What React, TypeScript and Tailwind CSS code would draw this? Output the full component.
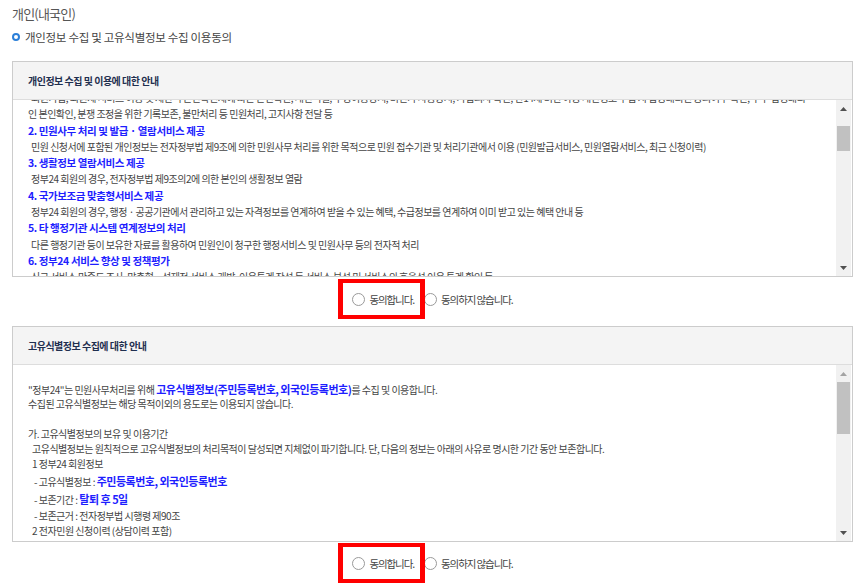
import React from "react";

const FONT = "font-['Noto_Sans_CJK_KR','Noto_Sans',sans-serif]";

function Scrollbar({ upDark, thumbClass }: { upDark: boolean; thumbClass: string }) {
  return (
    <div className="w-[15px] mr-[1px] bg-[#f1f1f1] flex flex-col shrink-0">
      <div className="h-[17px] flex items-center justify-center">
        <svg width="7" height="4" viewBox="0 0 7 4">
          <path d="M0 4 L3.5 0 L7 4 Z" fill={upDark ? "#505050" : "#a3a3a3"} />
        </svg>
      </div>
      <div className="flex-1 px-[1px]">
        <div className={thumbClass} />
      </div>
      <div className="h-[17px] flex items-center justify-center">
        <svg width="7" height="4" viewBox="0 0 7 4">
          <path d="M0 0 L7 0 L3.5 4 Z" fill="#505050" />
        </svg>
      </div>
    </div>
  );
}

function Radio() {
  return <span className="block w-[13px] h-[13px] rounded-full border border-[#9a9a9a] bg-white shrink-0" />;
}

function AgreeRow({ mt, mb }: { mt: string; mb: string }) {
  return (
    <div className={`flex justify-center items-center h-[13px] ${mt} ${mb}`}>
      <div className="relative flex items-center">
        <Radio />
        <span className="ml-[4px] text-[10.5px] leading-[13px] tracking-[-1.1px] text-[#444] whitespace-nowrap">동의합니다.</span>
        <div className="absolute left-[-14px] right-[-11px] top-[-14px] bottom-[-13px] border-y-4 border-x-[5px] border-[#ff0000]" />
      </div>
      <div className="flex items-center ml-[10px]">
        <Radio />
        <span className="ml-[4px] text-[10.5px] leading-[13px] tracking-[-1.1px] text-[#444] whitespace-nowrap">동의하지 않습니다.</span>
      </div>
    </div>
  );
}

const H = "text-[10.5px] font-bold text-[#1e1eff] tracking-[-0.4px] leading-[16.3px] whitespace-nowrap";
const B = "text-[10px] text-[#444] tracking-[-0.5px] leading-[16.3px] whitespace-nowrap pl-[3px]";
const B0 = "text-[10px] text-[#444] tracking-[-0.5px] leading-[16.3px] whitespace-nowrap";

const T = "text-[10px] text-[#444] tracking-[-0.5px] whitespace-nowrap";
const BL = "font-bold text-[#1e1eff] tracking-[-0.5px]";

export default function App() {
  return (
    <div className={`${FONT} bg-white w-[868px] h-[584px] overflow-hidden pt-[5px] pl-[12px] pr-[15px]`}>
      <div className="text-[13px] leading-[18px] tracking-[-0.8px] text-[#555]">개인(내국인)</div>
      <div className="flex items-center mt-[6px] h-[16px]">
        <span className="block w-[8px] h-[8px] rounded-full border-2 border-[#2b7fd8]" />
        <span className="ml-[5px] text-[11.5px] leading-[16px] tracking-[-0.3px] text-[#444]">
          개인정보 수집 및 고유식별정보 수집 이용동의
        </span>
      </div>

      {/* Box 1 */}
      <div className="mt-[16px] border border-[#cccccc]">
        <div className="h-[38px] bg-[#f4f4f4] border-b border-[#dddddd] flex items-center pl-[15px]">
          <span className="text-[10px] font-bold tracking-[-0.5px] text-[#1f2f4f]">개인정보 수집 및 이용에 대한 안내</span>
        </div>
        <div className="h-[176px] flex">
          <div className="flex-1 overflow-hidden pl-[15px]">
            <div className="-mt-[10px]">
              <div className={B}>
                회원가입, 회원제 서비스 이용 및 제한적 본인확인제에 따른 본인확인, 개인식별, 부정이용방지, 비인가 사용방지, 가입의사 확인, 만14세 미만 아동 개인정보 수집 시 법정대리인 동의여부 확인, 추후 법정대리
              </div>
              <div className={B0}>인 본인확인, 분쟁 조정을 위한 기록보존, 불만처리 등 민원처리, 고지사항 전달 등</div>
              <div className={H}>2. 민원사무 처리 및 발급 · 열람서비스 제공</div>
              <div className={B}>
                민원 신청서에 포함된 개인정보는 전자정부법 제9조에 의한 민원사무 처리를 위한 목적으로 민원 접수기관 및 처리기관에서 이용 (민원발급서비스, 민원열람서비스, 최근 신청이력)
              </div>
              <div className={H}>3. 생활정보 열람서비스 제공</div>
              <div className={B}>정부24 회원의 경우, 전자정부법 제9조의2에 의한 본인의 생활정보 열람</div>
              <div className={H}>4. 국가보조금 맞춤형서비스 제공</div>
              <div className={B}>
                정부24 회원의 경우, 행정 · 공공기관에서 관리하고 있는 자격정보를 연계하여 받을 수 있는 혜택, 수급정보를 연계하여 이미 받고 있는 혜택 안내 등
              </div>
              <div className={H}>5. 타 행정기관 시스템 연계정보의 처리</div>
              <div className={B}>다른 행정기관 등이 보유한 자료를 활용하여 민원인이 청구한 행정서비스 및 민원사무 등의 전자적 처리</div>
              <div className={H}>6. 정부24 서비스 향상 및 정책평가</div>
              <div className={B}>
                신규 서비스 만족도 조사, 맞춤형 · 선제적 서비스 개발, 이용통계 작성 등 서비스 분석 및 서비스의 효율성 이용 통계 확인 등
              </div>
            </div>
          </div>
          <Scrollbar upDark={true} thumbClass="mt-[9px] h-[25px] bg-[#c1c1c1]" />
        </div>
      </div>

      <AgreeRow mt="mt-[16px]" mb="mb-[20px]" />

      {/* Box 2 */}
      <div className="border border-[#cccccc]">
        <div className="h-[38px] bg-[#f4f4f4] border-b border-[#dddddd] flex items-center pl-[15px]">
          <span className="text-[10px] font-bold tracking-[-0.5px] text-[#1f2f4f]">고유식별정보 수집에 대한 안내</span>
        </div>
        <div className="h-[176px] flex">
          <div className="flex-1 overflow-hidden pl-[15px] pt-[17px]">
            <div className={`${T} leading-[15px]`}>
              "정부24"는 민원사무처리를 위해 <span className={`${BL} text-[11px]`}>고유식별정보(주민등록번호, 외국인등록번호)</span>를 수집 및 이용합니다.
            </div>
            <div className={`${T} leading-[14px]`}>수집된 고유식별정보는 해당 목적이외의 용도로는 이용되지 않습니다.</div>
            <div className="h-[15px]" />
            <div className={`${T} leading-[15px]`}>가. 고유식별정보의 보유 및 이용기간</div>
            <div className={`${T} leading-[15px] pl-[4px]`}>
              고유식별정보는 원칙적으로 고유식별정보의 처리목적이 달성되면 지체없이 파기합니다. 단, 다음의 정보는 아래의 사유로 명시한 기간 동안 보존합니다.
            </div>
            <div className={`${T} leading-[16px] pl-[4px]`}>1 정부24 회원정보</div>
            <div className={`${T} leading-[18px] pl-[6px]`}>
              - 고유식별정보 : <span className={`${BL} text-[11px]`}>주민등록번호, 외국인등록번호</span>
            </div>
            <div className={`${T} leading-[17px] pl-[6px]`}>
              - 보존기간 : <span className={`${BL} text-[11px]`}>탈퇴 후 5일</span>
            </div>
            <div className={`${T} leading-[15px] pl-[6px]`}>- 보존근거 : 전자정부법 시행령 제90조</div>
            <div className={`${T} leading-[16px] pl-[4px]`}>2 전자민원 신청이력 (상담이력 포함)</div>
          </div>
          <Scrollbar upDark={false} thumbClass="mt-0 h-[52px] bg-[#c1c1c1]" />
        </div>
      </div>

      <AgreeRow mt="mt-[15px]" mb="mb-0" />
    </div>
  );
}
